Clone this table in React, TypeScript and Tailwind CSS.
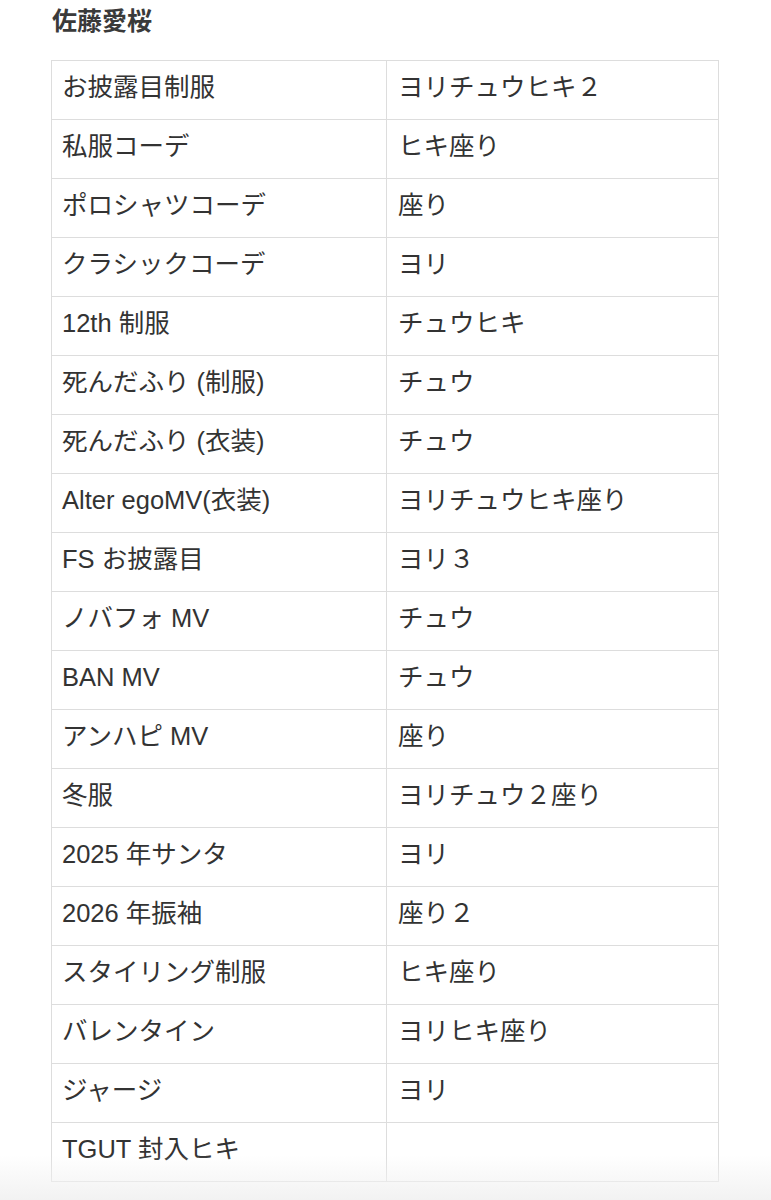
import React from 'react';

// 行データ（左：衣装名、右：内容）
const ROWS: [string, string][] = [
  ['お披露目制服', 'ヨリチュウヒキ２'],
  ['私服コーデ', 'ヒキ座り'],
  ['ポロシャツコーデ', '座り'],
  ['クラシックコーデ', 'ヨリ'],
  ['12th 制服', 'チュウヒキ'],
  ['死んだふり (制服)', 'チュウ'],
  ['死んだふり (衣装)', 'チュウ'],
  ['Alter egoMV(衣装)', 'ヨリチュウヒキ座り'],
  ['FS お披露目', 'ヨリ３'],
  ['ノバフォ MV', 'チュウ'],
  ['BAN MV', 'チュウ'],
  ['アンハピ MV', '座り'],
  ['冬服', 'ヨリチュウ２座り'],
  ['2025 年サンタ', 'ヨリ'],
  ['2026 年振袖', '座り２'],
  ['スタイリング制服', 'ヒキ座り'],
  ['バレンタイン', 'ヨリヒキ座り'],
  ['ジャージ', 'ヨリ'],
  ['TGUT 封入ヒキ', ''],
];

const FONT = '"Liberation Sans", "Noto Sans CJK JP", sans-serif';

export default function App() {
  return (
    <div className="relative min-h-[1200px] bg-white overflow-hidden" style={{ fontFamily: FONT }}>
      <div className="pl-[51px] pr-[52px]">
        <h2 className="pt-[2px] h-[60px] text-[25px] leading-[38px] font-bold text-[#3a3a3a] pl-[1px]">
          佐藤愛桜
        </h2>
        <table className="w-[668px] border-collapse table-fixed">
          <tbody>
            {ROWS.map(([name, value]) => (
              <tr key={name} className="h-[59px]">
                <td className="w-[335px] border border-[#dddddd] px-[10px] pb-[7px] align-middle text-[25.5px] leading-[34px] text-[#333333] whitespace-nowrap">
                  {name}
                </td>
                <td className="border border-[#dddddd] px-[11px] pb-[7px] align-middle text-[25.5px] leading-[34px] text-[#333333] whitespace-nowrap">
                  {value}
                </td>
              </tr>
            ))}
          </tbody>
        </table>
      </div>
      {/* 画面下端のフェード */}
      <div className="pointer-events-none absolute left-0 right-0 bottom-0 h-[45px] bg-gradient-to-b from-white/0 to-[#f2f2f2]" />
    </div>
  );
}
